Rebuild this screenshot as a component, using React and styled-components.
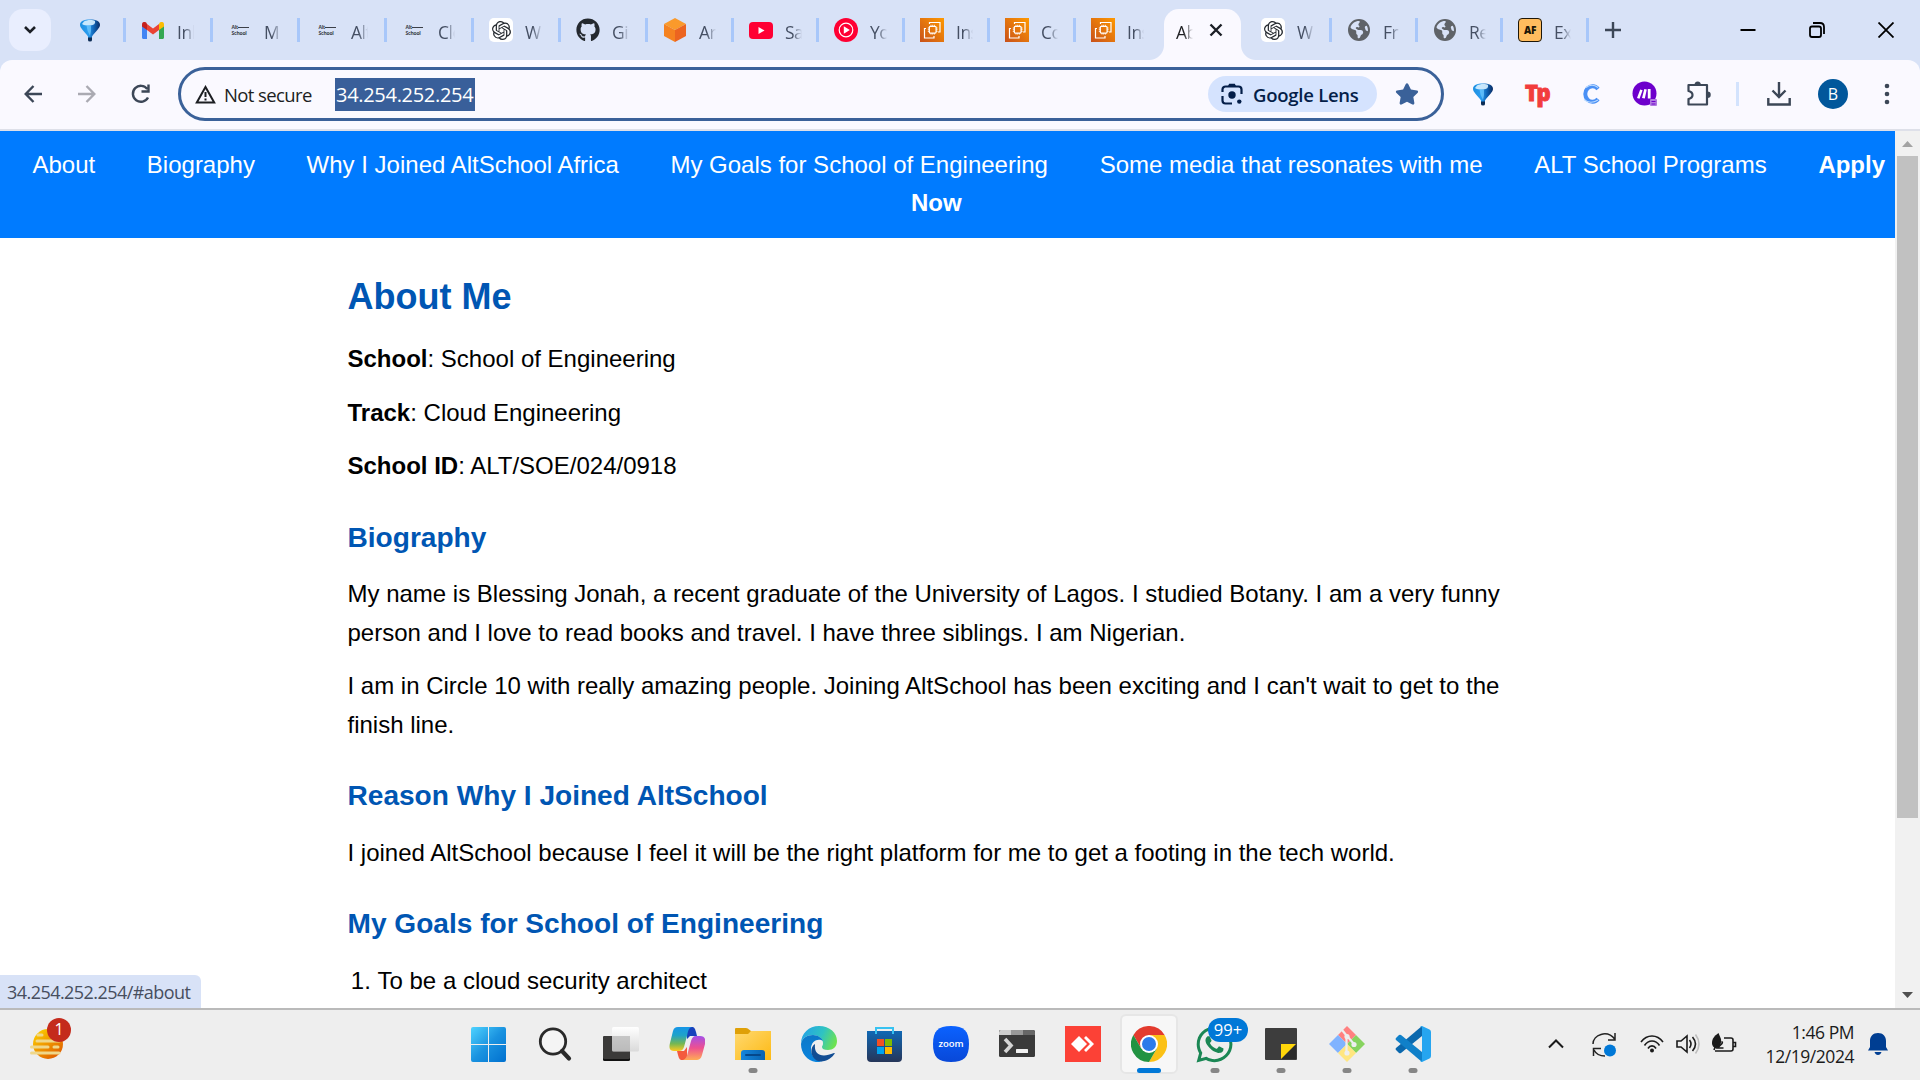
import React from "react";
import styled, { createGlobalStyle, css } from "styled-components";
import { SiOpenai } from "react-icons/si";
import { FaGithub, FaStar, FaWhatsapp } from "react-icons/fa";
import { FaEarthAmericas } from "react-icons/fa6";

const UI_FONT = '"Open Sans", "Noto Sans", sans-serif';
const PAGE_FONT = '"Liberation Sans", Arial, sans-serif';

const GlobalStyle = createGlobalStyle`
  *, *::before, *::after { box-sizing: border-box; }
  html, body { margin: 0; padding: 0; overflow: hidden; }
  svg { display: block; flex: none; }
`;

const Screen = styled.div`
  width: 1920px;
  height: 1080px;
  display: flex;
  flex-direction: column;
  overflow: hidden;
  background: #fff;
  font-family: ${UI_FONT};
`;

/* ---------- tab strip ---------- */

const TabStrip = styled.header`
  height: 60px;
  flex: none;
  display: flex;
  align-items: center;
  padding-left: 9px;
  background: #d8e2f7;
`;

const TabSearch = styled.button`
  width: 42px;
  height: 42px;
  flex: none;
  border: 0;
  padding: 0;
  border-radius: 14px;
  background: #e9eefe;
  display: flex;
  align-items: center;
  justify-content: center;
`;

const Tab = styled.div`
  width: ${(p) => p.$width}px;
  height: 24px;
  flex: none;
  display: flex;
  align-items: center;
  gap: 12px;
  padding-left: ${(p) => p.$inset ?? 15}px;
  border-right: ${(p) => (p.$divider ? "3px solid #a8c7fa" : "0")};
`;

const Favicon = styled.span`
  width: 24px;
  height: 24px;
  flex: none;
  display: flex;
  align-items: center;
  justify-content: center;
  border-radius: ${(p) => p.$radius ?? 0}px;
  background: ${(p) => p.$bg ?? "transparent"};
  border: ${(p) => p.$border ?? "0"};
  color: ${(p) => p.$color ?? "#24292f"};
`;

const TabTitle = styled.span`
  width: 17px;
  overflow: hidden;
  white-space: nowrap;
  font-size: 17.5px;
  line-height: 24px;
  letter-spacing: -0.5px;
  color: ${(p) => (p.$active ? "#1f2023" : "#454f63")};
  padding-top: 2px;
  margin-bottom: -2px;
  mask-image: linear-gradient(90deg, #000 45%, transparent 100%);
`;

const ActiveTab = styled.div`
  width: 77px;
  height: 51px;
  flex: none;
  align-self: flex-end;
  margin-left: 13px;
  padding: 0 0 9px 12px;
  display: flex;
  align-items: center;
  gap: 16px;
  position: relative;
  background: #faf9ff;
  border-radius: 15px 15px 0 0;
  &::before,
  &::after {
    content: "";
    position: absolute;
    bottom: 0;
    width: 15px;
    height: 15px;
  }
  &::before {
    left: -15px;
    background: radial-gradient(circle at 0 0, transparent 14.5px, #faf9ff 15.5px);
  }
  &::after {
    right: -15px;
    background: radial-gradient(circle at 100% 0, transparent 14.5px, #faf9ff 15.5px);
  }
`;

const NewTab = styled.span`
  margin-left: 16px;
`;

const WindowControls = styled.div`
  margin-left: auto;
  display: flex;
  align-items: center;
`;

const WindowButton = styled.span`
  width: 69px;
  display: flex;
  justify-content: center;
`;

const AltLogo = styled.span`
  width: 17px;
  display: flex;
  flex-direction: column;
  font: 700 5px/6px ${UI_FONT};
  letter-spacing: -0.2px;
  color: #3a3f49;
  & > span {
    display: flex;
    align-items: center;
  }
  & > span::after {
    content: "";
    flex: 1;
    height: 1px;
    background: #3c4048;
  }
`;

const AfText = styled.b`
  font: 800 10px/20px ${UI_FONT};
  letter-spacing: -0.4px;
  color: #1d1608;
`;

/* ---------- toolbar ---------- */

const ToolbarBack = styled.div`
  flex: none;
  height: 71px;
  background: #d8e2f7;
`;

const Toolbar = styled.div`
  height: 71px;
  display: flex;
  align-items: center;
  padding: 0 18px 1px 24px;
  background: #faf9ff;
  border-bottom: 2px solid #dee0e9;
  border-radius: 12px 12px 0 0;
`;

const NavButtons = styled.div`
  width: 154px;
  display: flex;
  align-items: center;
  gap: 35.5px;
`;

const AddressBar = styled.div`
  width: 1266px;
  height: 54px;
  flex: none;
  display: flex;
  align-items: center;
  border: 3px solid #3a6199;
  border-radius: 27px;
  padding: 0 22px 0 14px;
  background: #faf9ff;
`;

const Security = styled.span`
  width: 140px;
  display: flex;
  align-items: center;
  gap: 8px;
  color: #1c1e22;
  font-size: 18.5px;
  font-weight: 500;
  letter-spacing: -0.6px;
  white-space: nowrap;
`;

const Url = styled.span`
  height: 33px;
  width: 140px;
  padding-left: 1px;
  line-height: 33px;
  font-size: 20px;
  letter-spacing: -0.3px;
  white-space: nowrap;
  background: #395f9a;
  color: #fff;
`;

const Lens = styled.span`
  margin-left: auto;
  width: 169px;
  height: 36px;
  border-radius: 18px;
  background: #d5e3fe;
  display: flex;
  align-items: center;
  gap: 10px;
  padding-left: 13px;
  color: #041e49;
  font-size: 18.5px;
  font-weight: 600;
  letter-spacing: -0.25px;
  white-space: nowrap;
`;

const StarSlot = styled.span`
  margin-left: 18px;
  color: #3a6199;
`;

const Extensions = styled.div`
  display: flex;
  align-items: center;
  margin-left: 12px;
`;

const ExtSlot = styled.span`
  width: 54px;
  height: 30px;
  display: flex;
  align-items: center;
  justify-content: center;
`;

const ToolDivider = styled.span`
  width: 3px;
  height: 24px;
  margin-left: 10px;
  background: #d3e3fd;
`;

const Avatar = styled.span`
  width: 30px;
  height: 30px;
  margin-left: 27px;
  border-radius: 50%;
  background: #01579b;
  color: #fff;
  font-size: 16px;
  line-height: 30px;
  text-align: center;
`;

const TpMark = styled.b`
  font: 800 22px/22px ${UI_FONT};
  letter-spacing: -1.6px;
  color: #f23d3d;
  padding-bottom: 4px;
  -webkit-text-stroke: 0.9px #f23d3d;
`;

/* ---------- web page ---------- */

const Viewport = styled.div`
  height: 877px;
  flex: none;
  display: flex;
  position: relative;
  overflow: hidden;
`;

const Page = styled.div`
  width: 1895px;
  height: 877px;
  overflow: hidden;
  font-family: ${PAGE_FONT};
  font-size: 24px;
  line-height: 1.6;
  color: #000;
`;

const SiteNav = styled.nav`
  padding: 15px 0;
  text-align: center;
  background: #007bff;
`;

const NavLink = styled.a`
  margin: 0 22.5px;
  color: #fff;
  text-decoration: none;
  font-weight: ${(p) => (p.$strong ? 700 : 400)};
`;

const Container = styled.main`
  width: 1200px;
  margin: 0 auto;
  padding-top: 30px;
`;

const heading = css`
  color: #0056b3;
  font-weight: 700;
`;

const Title = styled.h2`
  ${heading}
  font-size: 36px;
  margin: 0 0 15px;
`;

const SectionTitle = styled.h3`
  ${heading}
  font-size: 28.08px;
  margin: 30px 0 15px;
`;

const Paragraph = styled.p`
  margin: 15px 0;
`;

const Goals = styled.ol`
  margin: 15px 0;
  padding-left: 30px;
`;

const Scrollbar = styled.div`
  width: 25px;
  display: flex;
  flex-direction: column;
  align-items: center;
  background: #f1f1f1;
  padding: 10px 0;
`;

const Thumb = styled.div`
  width: 21px;
  height: 662px;
  margin: 9px 0 auto;
  background: #c1c1c1;
`;

const StatusBubble = styled.div`
  position: absolute;
  left: 0;
  bottom: 0;
  width: 201px;
  height: 33px;
  padding-left: 7px;
  border-radius: 0 6px 0 0;
  background: #d8e2f7;
  color: #474e5e;
  font-size: 18px;
  line-height: 35px;
  letter-spacing: -0.55px;
  white-space: nowrap;
`;

/* ---------- taskbar ---------- */

const Taskbar = styled.footer`
  height: 72px;
  flex: none;
  display: flex;
  border-top: 2px solid #bababa;
  background: #eee;
`;

const Widget = styled.div`
  width: 455px;
  flex: none;
  padding: 18px 0 0 30px;
  position: relative;
`;

const Count = styled.span`
  position: absolute;
  left: 47px;
  top: 8px;
  width: 24px;
  height: 24px;
  border-radius: 50%;
  background: #c42b1c;
  color: #fff;
  font-size: 16px;
  line-height: 23px;
  text-align: center;
`;

const Apps = styled.div`
  display: flex;
`;

const AppSlot = styled.div`
  width: 66px;
  height: 70px;
  position: relative;
  display: flex;
  justify-content: center;
  padding: 16px 0 0 1px;
  &::after {
    content: "";
    position: absolute;
    bottom: 7px;
    left: calc(50% + 0.5px);
    transform: translateX(-50%);
    height: 5px;
    border-radius: 3px;
    width: ${(p) => (p.$active ? 24 : 9)}px;
    background: ${(p) => (p.$active ? "#0078d7" : p.$running ? "#868686" : "transparent")};
  }
  &::before {
    content: "";
    position: absolute;
    display: ${(p) => (p.$active ? "block" : "none")};
    left: 5px;
    top: 4px;
    width: 58px;
    height: 60px;
    border-radius: 6px;
    background: #f7f7f7;
    border: 2px solid #e6e6e6;
  }
  & > svg {
    position: relative;
  }
`;

const Unread = styled.span`
  position: absolute;
  left: 27px;
  top: 8px;
  width: 40px;
  height: 24px;
  border-radius: 12px;
  background: #0078d7;
  color: #fff;
  font-size: 16.5px;
  line-height: 24px;
  text-align: center;
`;

const Tray = styled.div`
  margin-left: auto;
  padding: 0 32px 2px 0;
  display: flex;
  align-items: center;
`;

const TraySlot = styled.span`
  display: flex;
  width: ${(p) => p.$width}px;
`;

const Clock = styled.div`
  width: 117px;
  text-align: right;
  font-size: 17.5px;
  line-height: 24px;
  letter-spacing: -0.45px;
  color: #1b1b1b;
  white-space: nowrap;
`;

const BellSlot = styled.span`
  margin-left: 14px;
`;

/* ---------- drawings ---------- */

const Stroke = ({ w, h, d, color = "#3c4757", sw = 2.4, ...rest }) => (
  <svg width={w} height={h} viewBox={`0 0 ${w} ${h}`} fill="none" stroke={color} strokeWidth={sw} {...rest}>
    <path d={d} />
  </svg>
);

const Balloon = () => (
  <svg width="22" height="24" viewBox="0 0 22 24">
    <defs>
      <linearGradient id="bal" x1="0" x2="1">
        <stop offset="0" stopColor="#1c8fe0" />
        <stop offset=".4" stopColor="#2b9df0" />
        <stop offset=".7" stopColor="#0f62b4" />
        <stop offset="1" stopColor="#0a2b62" />
      </linearGradient>
    </defs>
    <path d="M1 7C1 3 5 1.500 11 1.500S21 3 21 7c0 3-5 7-8 11.500V20H9v-1.500C6 14 1 10 1 7Z" fill="url(#bal)" />
    <path d="M9 19.500h4V22q0 1.500-2 1.500T9 22Z" fill="#0c2c55" />
    <path d="M5 3.500C8 1.500 14 1.500 16 3q1 4-5 4.500Q5 7.500 3 6Z" fill="#d9f1ff" opacity=".9" />
    <path d="M7.500 7.500h4.500q.5 6-1 10.500-3-5-3.500-10.500Z" fill="#6ec8ff" opacity=".75" />
  </svg>
);

const Gmail = () => (
  <svg width="22" height="17" viewBox="0 0 22 17">
    <path d="M0 3v12.500C0 16.400.600 17 1.500 17H5V7Z" fill="#4285f4" />
    <path d="M22 3v12.500c0 .9-.6 1.500-1.500 1.500H17V7Z" fill="#34a853" />
    <path d="M17 2v6l5-3.500V2.500C22 0 19.500-.8 17.800.6Z" fill="#fbbc04" />
    <path d="M5 8V2l6 4.500L17 2v6l-6 4.500Z" fill="#ea4335" />
    <path d="M0 2.500v2L5 8V2L4.200.6C2.500-.8 0 0 0 2.500Z" fill="#c5221f" />
  </svg>
);

const Cube = () => (
  <svg width="24" height="24" viewBox="0 0 24 24">
    <path d="m12 0 11 6-11 6L1 6Z" fill="#fa9a2b" />
    <path d="M1 6v12l11 6V12Z" fill="#f58220" />
    <path d="M23 6v12l-11 6V12Z" fill="#ec6420" />
  </svg>
);

const YouTube = () => (
  <svg width="24" height="17" viewBox="0 0 24 17">
    <rect width="24" height="17" rx="4" fill="#ff0033" />
    <path d="m9.500 5 6 3.500-6 3.500Z" fill="#fff" />
  </svg>
);

const YtMusic = () => (
  <svg width="24" height="24" viewBox="0 0 24 24">
    <circle cx="12" cy="12" r="12" fill="#ff0033" />
    <circle cx="12" cy="12" r="6.800" fill="none" stroke="#fff" strokeWidth="1.200" />
    <path d="m9.800 8.200 6 3.800-6 3.800Z" fill="#fff" />
  </svg>
);

const Ec2 = () => (
  <svg width="24" height="24" viewBox="0 0 24 24" fill="none" stroke="#fff" strokeWidth="1.200">
    <defs>
      <linearGradient id="ec2" x1="0" y1="1" x2="1" y2="0">
        <stop offset="0" stopColor="#c8511b" />
        <stop offset="1" stopColor="#ff9900" />
      </linearGradient>
    </defs>
    <path d="M0 0h24v24H0Z" fill="url(#ec2)" stroke="none" />
    <path d="M9.500 6V4.500H20V14h-2M6 10.500H4.500V20H14v-2" />
    <rect x="9.300" y="8.300" width="6.800" height="6.800" rx="1" />
    <path d="M11 6.800v1.500M12.700 6.800v1.500M14.400 6.800v1.500M11 15.100v1.500M12.700 15.100v1.500M14.400 15.100v1.500M7.800 10h1.500M7.800 11.700h1.500M7.800 13.400h1.500M16.100 10h1.500M16.100 11.700h1.500M16.100 13.400h1.500" strokeWidth=".8" />
  </svg>
);

const LensIcon = () => (
  <svg width="22" height="22" viewBox="0 0 22 22" fill="none" stroke="#041e49" strokeWidth="2.200">
    <path d="M1.500 9V6.500a3 3 0 0 1 3-3h13a3 3 0 0 1 3 3V11M1.500 13v4.500a3 3 0 0 0 3 3H11" />
    <path d="M7 3 8.200.8h5.600L15 3" fill="#041e49" stroke="none" />
    <circle cx="11" cy="12" r="3.700" fill="#041e49" stroke="none" />
    <circle cx="18.300" cy="18.600" r="2.200" fill="#041e49" stroke="none" />
  </svg>
);

const CIcon = () => (
  <svg width="20" height="22" viewBox="0 0 20 22" fill="none">
    <path d="M17 6A7.200 7.800 0 1 0 17 16" stroke="#4a90f5" strokeWidth="4" />
    <path d="M3 16.500C7 20 12 20 17 17M5 4.500C9 1.500 13 1.500 17 4.500" stroke="#bcdcff" strokeWidth="1.100" />
  </svg>
);

const MakeIcon = () => (
  <svg width="26" height="26" viewBox="0 0 26 26">
    <circle cx="12.500" cy="12.500" r="12" fill="#6d00cc" />
    <path d="m5 17 3.200-8.500 2.400.8L7.500 17.800ZM10 17l2.300-9 2.500.4-2 9.100ZM15.800 8h2.800v9.500h-2.800Z" fill="#fff" />
    <rect x="18" y="18" width="7" height="7" rx="1" fill="#b07be0" />
    <path d="M19.500 20.500h4M19.500 23h4" stroke="#6d00cc" />
  </svg>
);

const WinLogo = () => (
  <svg width="36" height="36" viewBox="0 0 36 36">
    <defs>
      <linearGradient id="win" x1="0" y1="0" x2="1" y2="1">
        <stop offset="0" stopColor="#4fd3ff" />
        <stop offset=".5" stopColor="#1a93e0" />
        <stop offset="1" stopColor="#0070cf" />
      </linearGradient>
    </defs>
    <path d="M2 1h15v17H0V3Q0 1 2 1ZM18 1h15q2 0 2 2v15H18ZM0 19h17v17H2q-2 0-2-2ZM18 19h17v15q0 2-2 2H18Z" fill="url(#win)" />
  </svg>
);

const SearchLogo = () => (
  <svg width="36" height="36" viewBox="0 0 36 36" fill="none" stroke="#292929">
    <circle cx="16" cy="15.500" r="12.700" strokeWidth="2.800" fill="#f4f4f4" />
    <path d="m25 25 7 7.500" strokeWidth="4.200" strokeLinecap="round" />
  </svg>
);

const TaskView = () => (
  <svg width="36" height="36" viewBox="0 0 36 36">
    <defs>
      <linearGradient id="tv" x1="0" y1="0" x2="0" y2="1">
        <stop offset="0" stopColor="#fff" />
        <stop offset="1" stopColor="#dadada" />
      </linearGradient>
    </defs>
    <rect y="10" width="27" height="25" rx="1.500" fill="#111" />
    <rect y="10" width="27" height="23" rx="1.500" fill="#3b3a39" />
    <rect x="9" y="1" width="27" height="24.500" rx="1.500" fill="url(#tv)" />
    <path d="M9 10h18v15H9Z" fill="#9c9c9c" opacity=".5" />
  </svg>
);

const Copilot = () => (
  <svg width="36" height="36" viewBox="0 0 36 36">
    <defs>
      <linearGradient id="cpa" x1="0" y1="0" x2="0" y2="1">
        <stop offset="0" stopColor="#1595e8" />
        <stop offset=".35" stopColor="#1fa3c8" />
        <stop offset=".7" stopColor="#76b852" />
        <stop offset="1" stopColor="#ffc91f" />
      </linearGradient>
      <linearGradient id="cpb" x1="0" y1="0" x2="0" y2="1">
        <stop offset="0" stopColor="#a44fe8" />
        <stop offset=".5" stopColor="#ee5090" />
        <stop offset="1" stopColor="#ffac55" />
      </linearGradient>
    </defs>
    <path d="M18 1h5c2 0 3 1 4 5l1 4h-7l-3 3Z" fill="#1742bc" />
    <path d="M18 34h-5c-2 0-3-1-4-5l-1-4h7l3-4Z" fill="#f45a3e" />
    <path d="M9 1h14c-4 1-4 5-5 9l-3 11c-1 3-3 4-5 4H5c-5 0-5-4-4-8L4 5c1-3 2-4 5-4Z" fill="url(#cpa)" />
    <path d="M27 34H14c3-1 4-4 5-8l3-11c1-3 2-5 5-5h4c5 0 6 4 5 8l-3 11c-1 4-3 5-6 5Z" fill="url(#cpb)" />
  </svg>
);

const Folder = () => (
  <svg width="36" height="36" viewBox="0 0 36 36">
    <defs>
      <linearGradient id="fo" x1="0" y1="0" x2="1" y2="1">
        <stop offset="0" stopColor="#ffd970" />
        <stop offset="1" stopColor="#fdb913" />
      </linearGradient>
      <linearGradient id="fb" x1="0" y1="0" x2="1" y2="0">
        <stop offset="0" stopColor="#1686dc" />
        <stop offset="1" stopColor="#0762b0" />
      </linearGradient>
    </defs>
    <path d="M0 3q0-1 1-1h10q2 0 3 1.500L16 5h18q2 0 2 2v4H0Z" fill="#dfa007" />
    <path d="M0 8h13l3-3h20v29H0Z" fill="url(#fo)" />
    <path d="M6 34V27q0-3 3-3h18q3 0 3 3v7Z" fill="url(#fb)" />
    <path d="M11 29h14" stroke="#05478a" strokeWidth="2" strokeLinecap="round" />
  </svg>
);

const Edge = () => (
  <svg width="36" height="36" viewBox="0 0 36 36">
    <defs>
      <linearGradient id="ea" x1="0" y1=".3" x2="1" y2=".6">
        <stop offset="0" stopColor="#23a3e6" />
        <stop offset=".55" stopColor="#2fc3c2" />
        <stop offset="1" stopColor="#6ee34d" />
      </linearGradient>
      <linearGradient id="eb" x1="0" y1="0" x2="0" y2="1">
        <stop offset="0" stopColor="#0c78c8" />
        <stop offset="1" stopColor="#0a84de" />
      </linearGradient>
    </defs>
    <path d="M0 18C0 7 8 0 18 0c11 0 18 7 18 15 0 6-4 9-9 9-4 0-6-1-6-3 0-1 1-1 1-4 0-4-4-8-10-8C6 9 1 12 0 18Z" fill="url(#ea)" />
    <path d="M0 18c1-6 6-9 12-9 5 0 9 3 10 6-4-3-12-1-12 8 0 7 5 12 12 13C10 38 0 30 0 18Z" fill="url(#eb)" />
    <path d="M14 19c-1 8 5 14 19 8 1 0 1 0 0 1.500-5 7-14 8.500-18 5.500-6-4-6-13-1-16Z" fill="#124d93" />
  </svg>
);

const Store = () => (
  <svg width="36" height="36" viewBox="0 0 36 36">
    <defs>
      <linearGradient id="st" x1="0" y1="0" x2="0" y2="1">
        <stop offset="0" stopColor="#1068b4" />
        <stop offset="1" stopColor="#263659" />
      </linearGradient>
    </defs>
    <path d="M0 5h35v27q0 4-4 4H4q-4 0-4-4Z" fill="url(#st)" />
    <path d="M9 8V2h17v6" fill="none" stroke="#37c2f1" strokeWidth="2" />
    <path d="M10 13h7v7h-7Z" fill="#f25022" />
    <path d="M18 13h7v7h-7Z" fill="#7fba00" />
    <path d="M10 21h7v7h-7Z" fill="#00a4ef" />
    <path d="M18 21h7v7h-7Z" fill="#ffb900" />
  </svg>
);

const Zoom = () => (
  <svg width="36" height="36" viewBox="0 0 36 36">
    <defs>
      <linearGradient id="zo" x1="0" y1="0" x2="0" y2="1">
        <stop offset="0" stopColor="#0b62ff" />
        <stop offset="1" stopColor="#0848d8" />
      </linearGradient>
    </defs>
    <path d="M18 0C31 0 36 5 36 18s-5 18-18 18S0 31 0 18 5 0 18 0Z" fill="url(#zo)" />
    <text x="18" y="20.500" textAnchor="middle" fill="#fff" fontFamily="Open Sans" fontWeight="600" fontSize="9.500" textLength="25">zoom</text>
  </svg>
);

const Terminal = () => (
  <svg width="36" height="36" viewBox="0 0 36 36">
    <rect y="4" width="36" height="27" rx="1.500" fill="#3a3a3a" />
    <path d="M1.500 4H12v5H0V5.500Z" fill="#ccc" />
    <path d="M12 4h12v5H12Z" fill="#999" />
    <path d="M24 4h10.500L36 5.500V9H24Z" fill="#666" />
    <path d="m6 13 6 6.500L6 26" fill="none" stroke="#d5d5d5" strokeWidth="3.600" />
    <rect x="17" y="23" width="12" height="4" rx=".5" fill="#f1f1f1" />
  </svg>
);

const AnyDesk = () => (
  <svg width="36" height="36" viewBox="0 0 36 36">
    <path d="M0 0h36v36H0Z" fill="#fc4136" />
    <path d="m14 10 8 8-8 8-8-8Z" fill="#fff" />
    <path d="m19 12 2-2 8 8-8 8-2-2 6-6Z" fill="#fff" />
  </svg>
);

const ChromeLogo = () => (
  <svg width="36" height="36" viewBox="0 0 36 36">
    <path d="M2.400 9A18 18 0 0 1 33.600 9H18L10.200 22.500Z" fill="#e33b2e" />
    <path d="M33.600 9A18 18 0 0 1 18 36l7.800-13.500L18 9Z" fill="#fbc116" />
    <path d="M18 36A18 18 0 0 1 2.400 9l7.800 13.500h15.600Z" fill="#229342" />
    <circle cx="18" cy="18" r="9" fill="#fff" />
    <circle cx="18" cy="18" r="7" fill="#2d7bea" />
  </svg>
);

const Sticky = () => (
  <svg width="36" height="36" viewBox="0 0 36 36">
    <rect x="2" y="2" width="32" height="32" rx="1" fill="#3d3d3d" />
    <path d="M33 18v15H18Z" fill="#2b2b2b" />
    <path d="M18 18h15L18 33Z" fill="#ffd60a" />
  </svg>
);

const GitLogo = () => (
  <svg width="36" height="36" viewBox="0 0 36 36">
    <path d="m18 0 9 9-9 9-9-9Z" fill="#ff8080" />
    <path d="m9 9 9 9-9 9-9-9Z" fill="#80b3ff" />
    <path d="m27 9 9 9-9 9-9-9Z" fill="#87d35f" />
    <path d="m18 18 9 9-9 9-9-9Z" fill="#ffe680" />
    <path d="m13 4 4.500 5.500V27M18 10l7 8" stroke="#eee" strokeWidth="2.200" fill="none" />
    <g fill="#eee">
      <circle cx="18" cy="10.500" r="2.600" />
      <circle cx="25" cy="18.500" r="2.600" />
      <circle cx="18" cy="27" r="2.600" />
    </g>
  </svg>
);

const VsCode = () => (
  <svg width="36" height="36" viewBox="0 0 36 36">
    <path d="m1 24 3 3q1 .7 2 0L27 10V0L1 22q-1 1 0 2Z" fill="#0b68ad" />
    <path d="m1 12 3-3q1-.7 2 0l21 17v10L1 14Q0 13 1 12Z" fill="#1080c9" />
    <path d="M27 0 34.500 3.500Q36 4.300 36 6v24q0 1.700-1.500 2.500L27 36q-1.500 0-2-1 1.500 1 2-1V2q-.5-2-2-1 .5-1 2-1Z" fill="#26a5f0" />
  </svg>
);

const Weather = () => (
  <svg width="34" height="32" viewBox="0 0 34 32">
    <defs>
      <linearGradient id="sun" x1="0" y1="0" x2=".8" y2="1">
        <stop offset="0" stopColor="#ffd900" />
        <stop offset="1" stopColor="#df5a00" />
      </linearGradient>
    </defs>
    <circle cx="18" cy="16" r="15" fill="url(#sun)" />
    <path d="M8 7h4M7 13h22M1.500 19H18M24 19h4M1.500 25H29" stroke="#efd78a" strokeWidth="3" strokeLinecap="round" />
  </svg>
);

const Sync = () => (
  <svg width="25" height="25" viewBox="0 0 25 25" fill="none" stroke="#222" strokeWidth="1.500">
    <path d="M1 12C1 3 15-3 23 7.500M23 1v7h-7M1.500 24v-7.500h7.500M2 18c2 4 6 6 11 6" />
    <circle cx="18" cy="18.500" r="6" fill="#0078d7" stroke="none" />
  </svg>
);

const Wifi = () => (
  <svg width="24" height="20" viewBox="0 0 24 20" fill="none" stroke="#1b1b1b" strokeWidth="1.600">
    <path d="M1 8c6-8 16-8 22 0M4.500 11.500c4-6 11-6 15 0M8 14.500c2-3.500 6-3.500 8 0" />
    <circle cx="12" cy="16.500" r="2" fill="#1b1b1b" stroke="none" />
  </svg>
);

const Speaker = () => (
  <svg width="26" height="22" viewBox="0 0 26 22" fill="none" stroke="#1b1b1b" strokeWidth="1.600">
    <path d="M1 8h4l6-5v16l-6-5H1ZM13.500 7q3 4 0 8M16.500 4q6 7 0 14" />
    <path d="M19.500 1.500q7 9.500 0 19" stroke="#bdbdbd" />
  </svg>
);

const Battery = () => (
  <svg width="25" height="22" viewBox="0 0 25 22" fill="none" stroke="#1b1b1b" strokeWidth="1.600">
    <path d="M12 5h7q2 0 2 2v9q0 2-2 2H3M21.500 9.500h2v4h-2" />
    <path d="M6.500 0C2 3 0 6 0 10c0 3 2 5 4.500 5 4-1 5-5 4.500-9Z" fill="#1b1b1b" stroke="none" />
    <path d="M9.500 9.500q1.500-1.500.5 1L5.500 15h6M5 9l-3 8" />
  </svg>
);

const Bell = () => (
  <svg width="20" height="24" viewBox="0 0 20 24" fill="#003e92">
    <path d="M10 1c5 0 8 3.500 8 8v6l2 3.500H0L2 15V9c0-4.500 3-8 8-8ZM6.500 20h7q-1 3-3.500 3t-3.500-3Z" />
  </svg>
);

/* ---------- data ---------- */

const chatGpt = <Favicon $bg="#fff" $radius={5}><SiOpenai size={19} /></Favicon>;
const alt = (
  <Favicon>
    <AltLogo><span>Alt</span>School</AltLogo>
  </Favicon>
);
const ec2 = <Favicon><Ec2 /></Favicon>;
const globe = <Favicon $color="#5f6368"><FaEarthAmericas size={22} /></Favicon>;

const TABS_BEFORE = [
  { icon: <Favicon><Gmail /></Favicon>, title: "Inb", width: 87 },
  { icon: alt, title: "M", width: 87 },
  { icon: alt, title: "Alt", width: 87 },
  { icon: alt, title: "Clo", width: 87 },
  { icon: chatGpt, title: "W", width: 87 },
  { icon: <Favicon><FaGithub size={24} /></Favicon>, title: "Git", width: 87 },
  { icon: <Favicon><Cube /></Favicon>, title: "Ar", width: 86 },
  { icon: <Favicon><YouTube /></Favicon>, title: "Sa", width: 85 },
  { icon: <Favicon><YtMusic /></Favicon>, title: "Yo", width: 86 },
  { icon: ec2, title: "Ins", width: 85 },
  { icon: ec2, title: "Co", width: 86 },
  { icon: ec2, title: "Ins", width: 75, open: true },
];

const TABS_AFTER = [
  { icon: chatGpt, title: "W", width: 91, inset: 20 },
  { icon: globe, title: "Fr", width: 86 },
  { icon: globe, title: "Re", width: 85 },
  { icon: <Favicon $bg="#ffbc5e" $radius={4} $border="1.5px solid #1d1608"><AfText>AF</AfText></Favicon>, title: "Ex", width: 86 },
];

const NAV = [
  "About",
  "Biography",
  "Why I Joined AltSchool Africa",
  "My Goals for School of Engineering",
  "Some media that resonates with me",
  "ALT School Programs",
];

const FACTS = [
  ["School", "School of Engineering"],
  ["Track", "Cloud Engineering"],
  ["School ID", "ALT/SOE/024/0918"],
];

const APPS = [
  { icon: <WinLogo /> },
  { icon: <SearchLogo /> },
  { icon: <TaskView /> },
  { icon: <Copilot /> },
  { icon: <Folder />, running: true },
  { icon: <Edge /> },
  { icon: <Store /> },
  { icon: <Zoom /> },
  { icon: <Terminal /> },
  { icon: <AnyDesk /> },
  { icon: <ChromeLogo />, active: true },
  { icon: <FaWhatsapp size={41} color="#1a8754" style={{ marginTop: -2 }} />, running: true, unread: "99+" },
  { icon: <Sticky />, running: true },
  { icon: <GitLogo />, running: true },
  { icon: <VsCode />, running: true },
];

export default function App() {
  return (
    <Screen>
      <GlobalStyle />
      <TabStrip>
        <TabSearch>
          <Stroke w={14} h={10} d="m2 2 5 5 5-5" color="#1b1f26" sw={2.6} />
        </TabSearch>
        <Tab $width={75} $inset={27} $divider>
          <Favicon><Balloon /></Favicon>
        </Tab>
        {TABS_BEFORE.map((t, i) => (
          <Tab key={i} $width={t.width} $divider={!t.open}>
            {t.icon}
            <TabTitle>{t.title}</TabTitle>
          </Tab>
        ))}
        <ActiveTab>
          <TabTitle $active>Ab</TabTitle>
          <Stroke w={14} h={14} d="m1.500 1.500 11 11m0-11-11 11" color="#1b1f26" sw={2.4} />
        </ActiveTab>
        {TABS_AFTER.map((t, i) => (
          <Tab key={i} $width={t.width} $inset={t.inset} $divider>
            {t.icon}
            <TabTitle>{t.title}</TabTitle>
          </Tab>
        ))}
        <NewTab>
          <Stroke w={16} h={16} d="M8 0v16M0 8h16" />
        </NewTab>
        <WindowControls>
          <WindowButton><Stroke w={16} h={16} d="M.5 8h15" color="#000" sw={2} /></WindowButton>
          <WindowButton>
            <Stroke w={16} h={16} d="M3 4.500h7q2 0 2 2v6.500q0 2-2 2H3q-2 0-2-2V6.500q0-2 2-2ZM4 1h7q4 0 4 4v7" color="#000" sw={1.8} />
          </WindowButton>
          <WindowButton><Stroke w={16} h={16} d="m.5.5 15 15m0-15-15 15" color="#000" sw={1.8} /></WindowButton>
        </WindowControls>
      </TabStrip>

      <ToolbarBack>
        <Toolbar>
          <NavButtons>
            <Stroke w={18} h={18} d="M18 9H2M9.500 1 1.700 9l7.800 8" />
            <Stroke w={18} h={18} d="M0 9h16M8.500 1l7.800 8-7.800 8" color="#aaaab2" />
            <Stroke w={19} h={20} d="M16.300 5A8 8 0 1 0 17 13.500M17.500.5v7h-7" />
          </NavButtons>
          <AddressBar>
            <Security>
              <svg width="21" height="19" viewBox="0 0 21 19" fill="none" stroke="#1c1e22" strokeWidth="2">
                <path d="M10.500 2 19.200 17.500H1.800ZM10.500 7v5M10.500 13.500v2" />
              </svg>
              Not secure
            </Security>
            <Url>34.254.252.254</Url>
            <Lens>
              <LensIcon />
              Google Lens
            </Lens>
            <StarSlot><FaStar size={24} /></StarSlot>
          </AddressBar>
          <Extensions>
            <ExtSlot><Balloon /></ExtSlot>
            <ExtSlot><TpMark>Tp</TpMark></ExtSlot>
            <ExtSlot><CIcon /></ExtSlot>
            <ExtSlot><MakeIcon /></ExtSlot>
            <ExtSlot>
              <svg width="24" height="26" viewBox="0 0 24 26" fill="none" stroke="#3c4757" strokeWidth="2.200" strokeLinejoin="round">
                <path d="M1.500 4H20v19.500H1.500V18q4-1 4-4t-4-4Z" />
                <path d="M7.500 4a3.200 3.500 0 0 1 6.400 0ZM20.500 10.500a3.200 3.200 0 0 1 0 6.500Z" fill="#3c4757" stroke="none" />
              </svg>
            </ExtSlot>
            <ToolDivider />
          </Extensions>
          <Stroke w={24} h={24} d="M12 0v14M5.500 8.500 12 15l6.500-6.500M1.300 16v6.500h21.400V16" style={{ marginLeft: 28 }} />
          <Avatar>B</Avatar>
          <svg width="6" height="22" viewBox="0 0 6 22" fill="#3c4757" style={{ marginLeft: "auto", marginRight: 12 }}>
            <circle cx="3" cy="3" r="2.300" />
            <circle cx="3" cy="11" r="2.300" />
            <circle cx="3" cy="19" r="2.300" />
          </svg>
        </Toolbar>
      </ToolbarBack>

      <Viewport>
        <Page>
          <SiteNav>
            {NAV.map((label) => (
              <React.Fragment key={label}>
                <NavLink>{label}</NavLink>{" "}
              </React.Fragment>
            ))}
            <NavLink $strong>Apply Now</NavLink>
          </SiteNav>
          <Container>
            <Title>About Me</Title>
            {FACTS.map(([k, v]) => (
              <Paragraph key={k}>
                <strong>{k}</strong>: {v}
              </Paragraph>
            ))}
            <SectionTitle>Biography</SectionTitle>
            <Paragraph>
              My name is Blessing Jonah, a recent graduate of the University of Lagos. I studied Botany. I am a very
              funny person and I love to read books and travel. I have three siblings. I am Nigerian.
            </Paragraph>
            <Paragraph>
              I am in Circle 10 with really amazing people. Joining AltSchool has been exciting and I can't wait to get
              to the finish line.
            </Paragraph>
            <SectionTitle>Reason Why I Joined AltSchool</SectionTitle>
            <Paragraph>
              I joined AltSchool because I feel it will be the right platform for me to get a footing in the tech world.
            </Paragraph>
            <SectionTitle>My Goals for School of Engineering</SectionTitle>
            <Goals>
              <li>To be a cloud security architect</li>
            </Goals>
          </Container>
        </Page>
        <Scrollbar>
          <svg width="11" height="6" viewBox="0 0 11 6"><path d="M5.500 0 11 6H0Z" fill="#a3a3a3" /></svg>
          <Thumb />
          <svg width="11" height="6" viewBox="0 0 11 6"><path d="M5.500 6 11 0H0Z" fill="#505050" /></svg>
        </Scrollbar>
        <StatusBubble>34.254.252.254/#about</StatusBubble>
      </Viewport>

      <Taskbar>
        <Widget>
          <Weather />
          <Count>1</Count>
        </Widget>
        <Apps>
          {APPS.map((a, i) => (
            <AppSlot key={i} $running={a.running} $active={a.active}>
              {a.icon}
              {a.unread && <Unread>{a.unread}</Unread>}
            </AppSlot>
          ))}
        </Apps>
        <Tray>
          <TraySlot $width={44}><Stroke w={16} h={10} d="m1 8.500 7-7 7 7" color="#1b1b1b" sw={2} /></TraySlot>
          <TraySlot $width={48}><Sync /></TraySlot>
          <TraySlot $width={36}><Wifi /></TraySlot>
          <TraySlot $width={36}><Speaker /></TraySlot>
          <TraySlot $width={25}><Battery /></TraySlot>
          <Clock>
            <div>1:46 PM</div>
            <div>12/19/2024</div>
          </Clock>
          <BellSlot><Bell /></BellSlot>
        </Tray>
      </Taskbar>
    </Screen>
  );
}
